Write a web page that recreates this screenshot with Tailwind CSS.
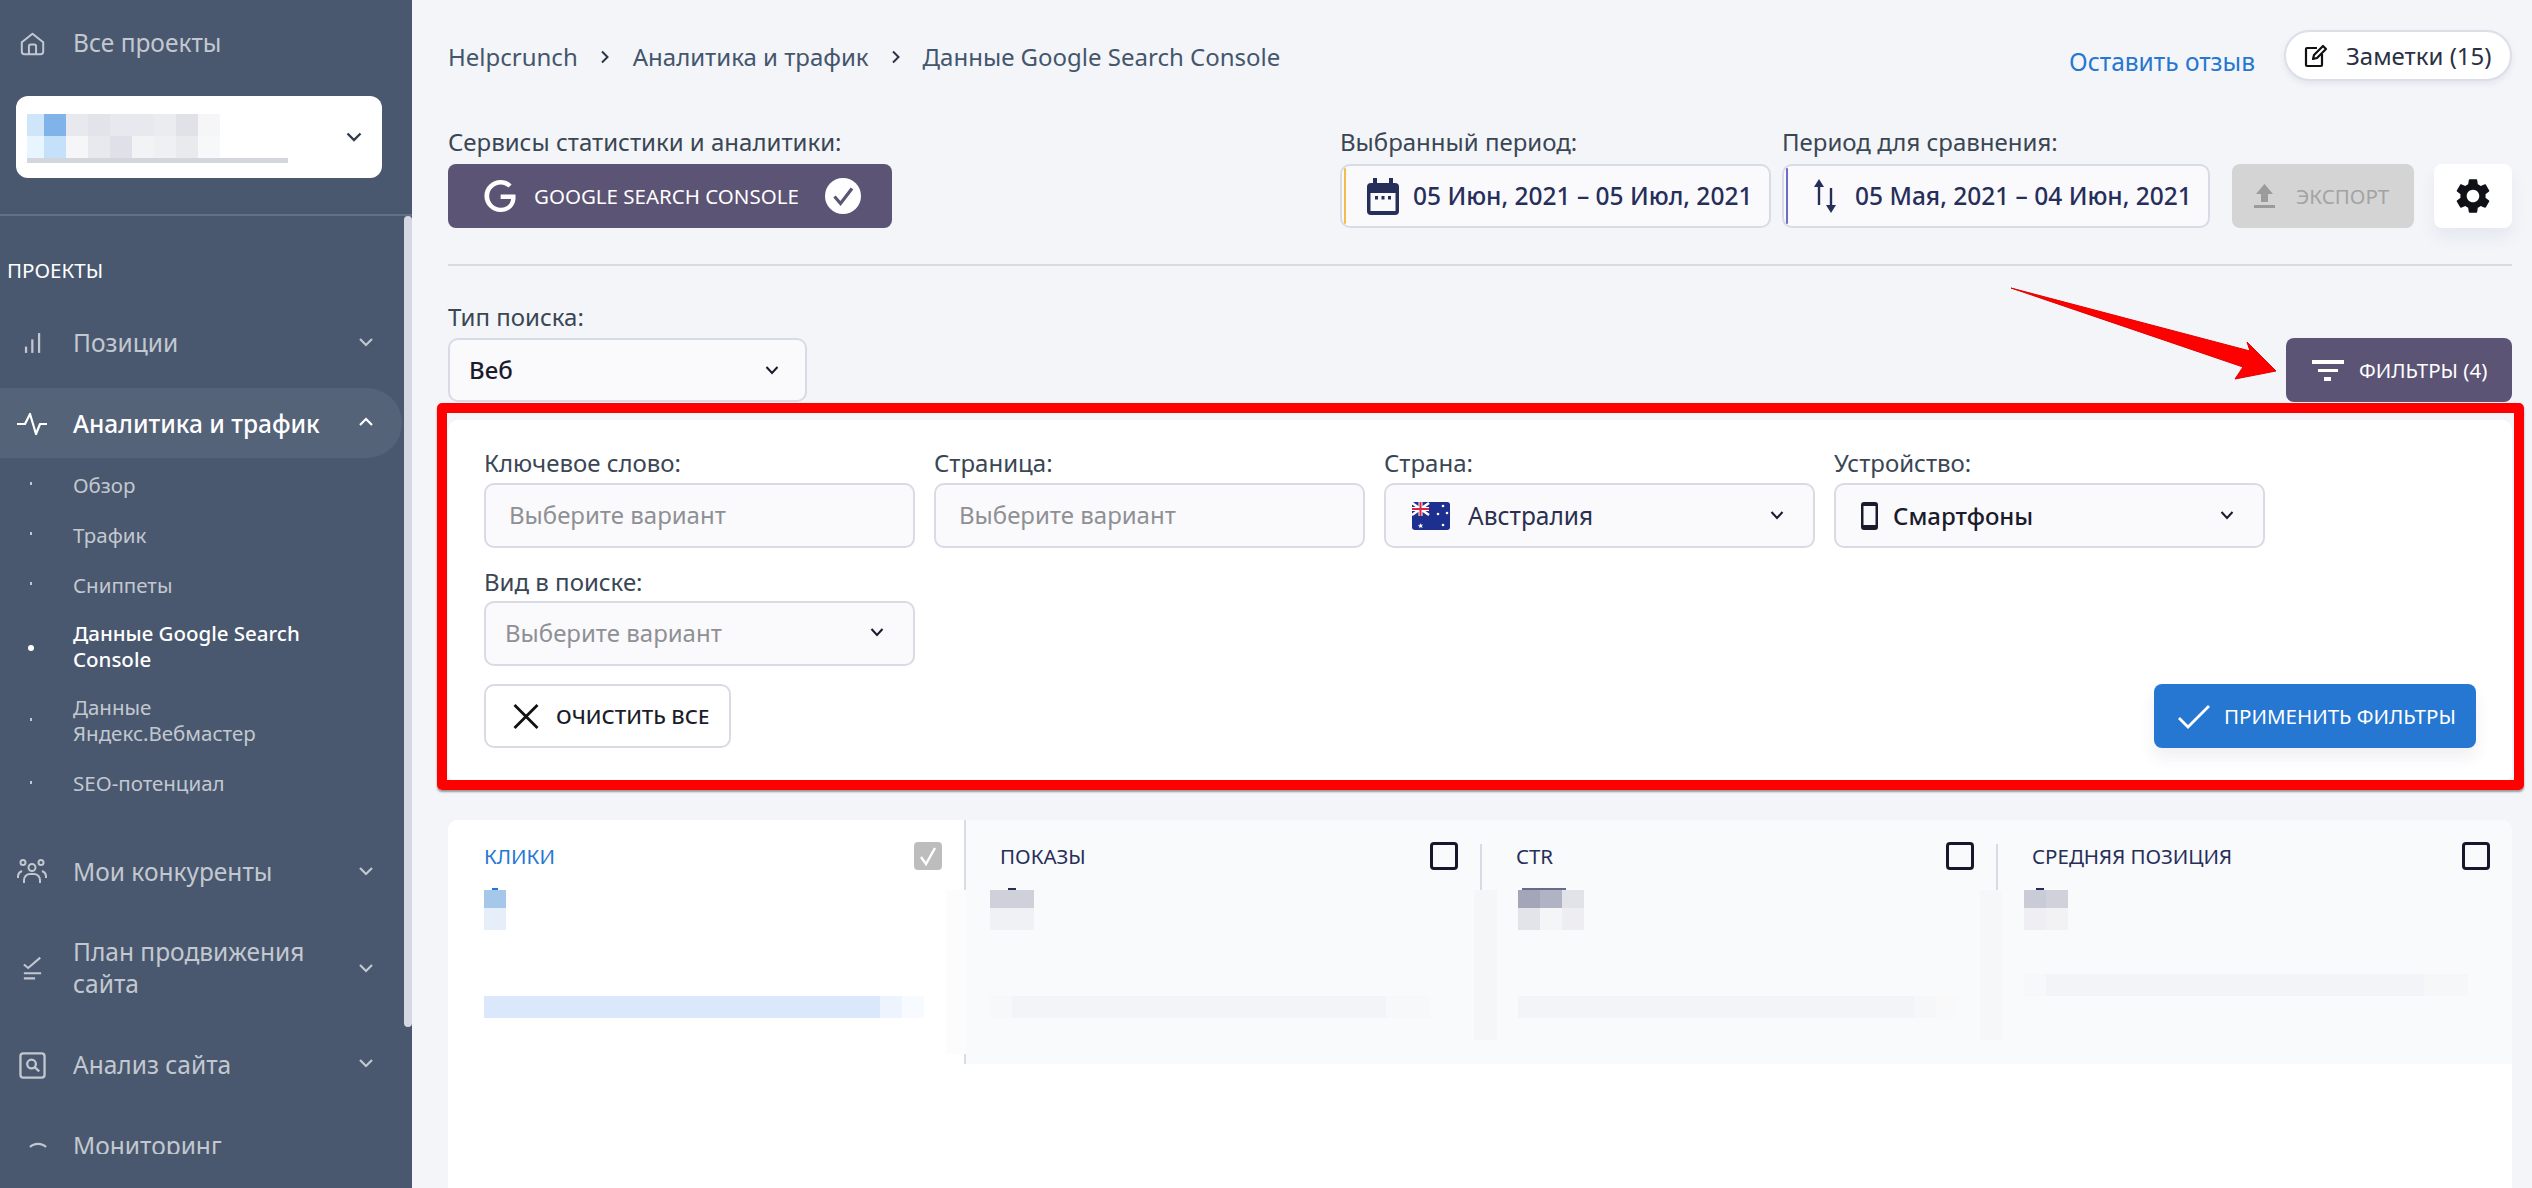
<!DOCTYPE html>
<html lang="ru">
<head>
    <meta charset="UTF-8">
    <title>Данные Google Search Console</title>
    <script src="https://cdn.jsdelivr.net/npm/@tailwindcss/browser@4"></script>
</head>
<body class="font-['Noto_Sans',sans-serif] bg-[#f3f5f9] h-[1188px] overflow-hidden flex">
    <!-- Сайдбар -->
    <aside class="w-[412px] shrink-0 h-[1188px] bg-[#49586f] flex flex-col">
        <div class="h-[216px] border-b-2 border-[#62718a] shrink-0">
            <a class="h-[96px] pb-[10px] flex items-center text-[24.500px] text-[#c3c8d0]">
                <span class="w-[73px] flex justify-center pr-[9px]">
                    <svg class="w-[25px] h-[25px]" viewBox="0 0 28 28" fill="none" stroke="#c3c8d0" stroke-width="2.2" stroke-linejoin="round"><path d="M2 12.5 14 3l12 9.5V23a3 3 0 0 1-3 3H5a3 3 0 0 1-3-3z"/><path d="M10 26v-9a2 2 0 0 1 2-2h4a2 2 0 0 1 2 2v9"/></svg>
                </span>
                Все проекты
            </a>
            <div class="mx-[16px] w-[366px] h-[82px] bg-white rounded-[12px] flex items-center justify-between pl-[11px] pr-[20px]">
                <div class="pt-[2px]">
                    <div class="grid grid-cols-[17px_22px_22px_22px_22px_22px_22px_22px_22px] h-[44px] grid-rows-2">
                        <i class="bg-[#cfe6fa]"></i><i class="bg-[#7fb3ea]"></i><i class="bg-[#e8e9ee]"></i><i class="bg-[#e3e4e9]"></i><i class="bg-[#e8e9ee]"></i><i class="bg-[#e8e9ee]"></i><i class="bg-[#ebecf0]"></i><i class="bg-[#e1e2e7]"></i><i class="bg-[#f6f6f8]"></i>
                        <i class="bg-[#e7f5fe]"></i><i class="bg-[#c4e1f9]"></i><i class="bg-[#f6f6f9]"></i><i class="bg-[#e8e9ee]"></i><i class="bg-[#e0e1e8]"></i><i class="bg-[#f2f3f5]"></i><i class="bg-[#eff0f3]"></i><i class="bg-[#e9eaee]"></i><i class="bg-[#f7f8fa]"></i>
                    </div>
                    <div class="w-[261px] h-[5px] bg-[#d3d6dd]"></div>
                </div>
                <svg class="w-[16px] h-[10px]" viewBox="0 0 16 10" fill="none" stroke="#303c4c" stroke-width="2.4"><path d="M1.5 1.5 8 8l6.500-6.500"/></svg>
            </div>
        </div>
        <nav class="relative h-[938px] overflow-hidden text-[24.500px] text-[#c3c8d0]">
            <!-- скроллбар -->
            <div class="absolute right-0 top-0 w-[8px] h-[811px] rounded-[4px] bg-[#d5d8e3]"></div>
            <div class="pl-[7px] pt-[42px] h-[92px] text-[20.500px] leading-[24px] text-white">ПРОЕКТЫ</div>
            <a class="h-[70px] flex items-center relative">
                <span class="w-[73px] flex justify-center pr-[8px]">
                    <svg class="w-[18px] h-[22px]" viewBox="0 0 20 24" fill="#c3c8d0"><rect x="1" y="16" width="2.500" height="7"/><rect x="8" y="8" width="2.500" height="15"/><rect x="15.500" y="1" width="2.500" height="22"/></svg>
                </span>
                Позиции
                <svg class="absolute left-[359px] top-[30px] w-[14px] h-[9px]" viewBox="0 0 14 9" fill="none" stroke="#c3c8d0" stroke-width="2.200"><path d="M1 1l6 6 6-6"/></svg>
            </a>
            <a class="mt-[10px] h-[70px] pt-[2px] w-[402px] rounded-r-[35px] bg-[#556379] flex items-center relative text-white font-medium">
                <span class="w-[73px] flex justify-center pr-[10px]">
                    <svg class="w-[30px] h-[24px]" viewBox="0 0 30 24" fill="none" stroke="#fff" stroke-width="2.200" stroke-linejoin="round"><path d="M0 12h8l5-10 6 20 4-10h7"/></svg>
                </span>
                Аналитика и трафик
                <svg class="absolute left-[359px] top-[29px] w-[14px] h-[9px]" viewBox="0 0 14 9" fill="none" stroke="#fff" stroke-width="2.200"><path d="M1 8l6-6 6 6"/></svg>
            </a>
            <ul class="pt-[2px] text-[20.500px] leading-[26px]">
                <li class="h-[50px] flex items-center relative"><i class="absolute left-[30px] top-[22px] w-[2px] h-[3px] bg-[#c3c8d0]"></i><span class="ml-[73px]">Обзор</span></li>
                <li class="h-[50px] flex items-center relative"><i class="absolute left-[30px] top-[22px] w-[2px] h-[3px] bg-[#c3c8d0]"></i><span class="ml-[73px]">Трафик</span></li>
                <li class="h-[50px] flex items-center relative"><i class="absolute left-[30px] top-[22px] w-[2px] h-[3px] bg-[#c3c8d0]"></i><span class="ml-[73px]">Сниппеты</span></li>
                <li class="h-[72px] flex items-center relative text-white font-medium"><i class="absolute left-[28px] top-[35px] w-[6px] h-[6px] rounded-full bg-white"></i><span class="ml-[73px]">Данные Google Search<br>Console</span></li>
                <li class="h-[75px] flex items-center relative"><i class="absolute left-[30px] top-[36px] w-[2px] h-[3px] bg-[#c3c8d0]"></i><span class="ml-[73px]">Данные<br>Яндекс.Вебмастер</span></li>
                <li class="h-[52px] flex items-center relative"><i class="absolute left-[30px] top-[24px] w-[2px] h-[3px] bg-[#c3c8d0]"></i><span class="ml-[73px]">SEO-потенциал</span></li>
            </ul>
            <a class="mt-[28px] h-[70px] flex items-center relative">
                <span class="w-[73px] flex justify-center pr-[9px]">
                    <svg class="w-[30px] h-[26px]" viewBox="0 0 30 26" fill="none" stroke="#c3c8d0" stroke-width="2"><circle cx="15" cy="8.500" r="3.500"/><circle cx="6" cy="3.500" r="2.500"/><circle cx="24" cy="3.500" r="2.500"/><path d="M7 24v-3a6 6 0 0 1 6-6h4a6 6 0 0 1 6 6v3"/><path d="M1 19v-2a6 6 0 0 1 4-5M29 19v-2a6 6 0 0 0-4-5"/></svg>
                </span>
                Мои конкуренты
                <svg class="absolute left-[359px] top-[30px] w-[14px] h-[9px]" viewBox="0 0 14 9" fill="none" stroke="#c3c8d0" stroke-width="2.200"><path d="M1 1l6 6 6-6"/></svg>
            </a>
            <a class="mt-[11px] h-[100px] flex items-center relative leading-[32px]">
                <span class="w-[73px] flex justify-center pr-[9px]">
                    <svg class="w-[19px] h-[24px]" viewBox="0 0 22 26" fill="none" stroke="#c3c8d0" stroke-width="2.400"><path d="M1 9l5 4L20 1"/><path d="M1 19h20M1 25h13"/></svg>
                </span>
                <span class="w-[270px]">План продвижения<br>сайта</span>
                <svg class="absolute left-[359px] top-[46px] w-[14px] h-[9px]" viewBox="0 0 14 9" fill="none" stroke="#c3c8d0" stroke-width="2.200"><path d="M1 1l6 6 6-6"/></svg>
            </a>
            <a class="mt-[12px] h-[70px] flex items-center relative">
                <span class="w-[73px] flex justify-center pr-[9px]">
                    <svg class="w-[27px] h-[27px]" viewBox="0 0 28 28" fill="none" stroke="#c3c8d0" stroke-width="2.400"><rect x="1.500" y="1.500" width="25" height="25" rx="3"/><circle cx="13" cy="12.500" r="4.500"/><path d="M16.500 16l4.500 4"/></svg>
                </span>
                Анализ сайта
                <svg class="absolute left-[359px] top-[29px] w-[14px] h-[9px]" viewBox="0 0 14 9" fill="none" stroke="#c3c8d0" stroke-width="2.200"><path d="M1 1l6 6 6-6"/></svg>
            </a>
            <a class="mt-[11px] h-[70px] flex items-center">
                <span class="w-[73px] flex justify-center pl-[3px]">
                    <svg class="w-[30px] h-[30px]" viewBox="0 0 30 30" fill="none" stroke="#c3c8d0" stroke-width="2.200"><path d="M7 16a10 8 0 0 1 16 0"/></svg>
                </span>
                Мониторинг
            </a>
        </nav>
    </aside>

    <!-- Контент -->
    <main class="relative flex-1 min-w-0 pl-[36px] pr-[20px] pt-[30px] flex flex-col text-[#3a4654] text-[24px] leading-[26px]">
        <header class="h-[51px] flex items-center justify-between shrink-0">
            <div class="flex items-center text-[#44566c] pt-[2px]">
                <span>Helpcrunch</span>
                <svg class="w-[10px] h-[14px] mx-[22.500px]" viewBox="0 0 10 14" fill="none" stroke="#2b3444" stroke-width="2"><path d="M2 1.500 7.500 7 2 12.500"/></svg>
                <span>Аналитика и трафик</span>
                <svg class="w-[10px] h-[14px] mx-[22px]" viewBox="0 0 10 14" fill="none" stroke="#2b3444" stroke-width="2"><path d="M2 1.500 7.500 7 2 12.500"/></svg>
                <span>Данные Google Search Console</span>
            </div>
            <div class="flex items-center">
                <a class="text-[#2577d1] pt-[13px] mr-[29px] text-[24.500px]">Оставить отзыв</a>
                <button class="w-[228px] h-[51px] rounded-full bg-white border-2 border-[#dcdee8] shadow-[0_3px_6px_rgba(60,70,110,0.08)] flex items-center pl-[18px] text-[#2b3044]">
                    <svg class="w-[24px] h-[24px] mr-[18px]" viewBox="0 0 24 24" fill="none" stroke="#111" stroke-width="2.200"><path d="M13 4H3a1 1 0 0 0-1 1v16a1 1 0 0 0 1 1h14a1 1 0 0 0 1-1V10"/><path d="M9 15l1-4 9-9 3 3-9 9z" stroke-linejoin="round"/></svg>
                    Заметки (15)
                </button>
            </div>
        </header>

        <section class="mt-[49px] flex justify-between shrink-0">
            <div>
                <div class="mb-[9px] mt-[-1px]">Сервисы статистики и аналитики:</div>
                <button class="w-[444px] h-[64px] rounded-[8px] bg-[#5b5475] text-white flex items-center pl-[36px] text-[20.500px] text-left">
                    <svg class="w-[32px] h-[32px] mr-[18px]" viewBox="0 0 24 24" fill="#fff"><path d="M12.480 10.920v3.280h7.840c-.240 1.840-.853 3.187-1.787 4.133-1.147 1.147-2.933 2.400-6.053 2.400-4.827 0-8.600-3.893-8.600-8.720s3.773-8.720 8.600-8.720c2.600 0 4.507 1.027 5.907 2.347l2.307-2.307C18.747 1.440 16.133 0 12.480 0 5.867 0 .307 5.387.307 12s5.560 12 12.173 12c3.573 0 6.267-1.173 8.373-3.360 2.160-2.160 2.840-5.213 2.840-7.667 0-.760-.053-1.467-.173-2.053H12.480z"/></svg>
                    <span class="w-[291px]">GOOGLE SEARCH CONSOLE</span>
                    <svg class="w-[36px] h-[36px]" viewBox="0 0 36 36"><circle cx="18" cy="18" r="18" fill="#fff"/><path d="M9.500 18.500l6 7L27 10.500" fill="none" stroke="#5b5475" stroke-width="3.200"/></svg>
                </button>
            </div>
            <div class="flex items-end">
                <div class="mr-[11px]">
                    <div class="mb-[9px] mt-[-1px]">Выбранный период:</div>
                    <button class="relative w-[431px] h-[64px] rounded-[10px] bg-[#fafafd] border-2 border-[#d8dae6] flex items-center pl-[25px] text-[#262e5a] font-medium text-[24.500px]">
                        <i class="absolute left-[2px] top-[2px] bottom-[2px] w-[2px] bg-[#f3bd4e] rounded-full"></i>
                        <svg class="w-[32px] h-[37px] mr-[14px]" viewBox="0 0 32 37" fill="#262e5a"><rect x="0" y="5" width="32" height="32" rx="4"/><rect x="6" y="0" width="4" height="8"/><rect x="22" y="0" width="4" height="8"/><rect x="3.500" y="15" width="25" height="18" fill="#fafafd"/><rect x="8" y="18" width="3" height="3.500"/><rect x="14.500" y="18" width="3" height="3.500"/><rect x="21" y="18" width="3" height="3.500"/></svg>
                        05 Июн, 2021 – 05 Июл, 2021
                    </button>
                </div>
                <div class="mr-[22px]">
                    <div class="mb-[9px] mt-[-1px]">Период для сравнения:</div>
                    <button class="relative w-[428px] h-[64px] rounded-[10px] bg-[#fafafd] border-2 border-[#d8dae6] flex items-center pl-[28px] text-[#262e5a] font-medium text-[24.500px]">
                        <i class="absolute left-[2px] top-[2px] bottom-[2px] w-[2px] bg-[#6a6ec7] rounded-full"></i>
                        <svg class="w-[26px] h-[34px] mr-[17px]" viewBox="0 0 26 34" fill="#262e5a"><rect x="5.800" y="5" width="2.400" height="21"/><path d="M7 0l5 8H2z"/><rect x="17.800" y="9" width="2.400" height="20"/><path d="M19 34l-5-8h10z"/></svg>
                        05 Мая, 2021 – 04 Июн, 2021
                    </button>
                </div>
                <button class="w-[182px] h-[64px] rounded-[8px] bg-[#d4d4d4] text-[#a3a3a3] flex items-center pl-[22px] text-[20.500px] mr-[20px]">
                    <svg class="w-[21px] h-[24px] mr-[21px]" viewBox="0 0 21 24" fill="#9b9b9b"><path d="M10.500 0 19 10h-5v8H7v-8H2z"/><rect x="0" y="21" width="21" height="3"/></svg>
                    ЭКСПОРТ
                </button>
                <button class="w-[78px] h-[64px] rounded-[8px] bg-white shadow-[0_10px_16px_rgba(60,70,110,0.07)] flex items-center justify-center">
                    <svg class="w-[42px] h-[42px]" viewBox="0 0 24 24" fill="#0f1116"><path d="M19.140 12.940c.040-.300.060-.610.060-.940 0-.320-.020-.640-.070-.940l2.030-1.580c.180-.140.230-.410.120-.610l-1.920-3.320c-.120-.220-.370-.290-.590-.220l-2.390.960c-.500-.380-1.030-.700-1.620-.940l-.360-2.540c-.040-.240-.240-.410-.480-.410h-3.840c-.240 0-.430.170-.470.410l-.360 2.540c-.590.240-1.130.570-1.620.940l-2.390-.960c-.220-.080-.470 0-.590.220L2.740 8.870c-.120.210-.080.470.120.610l2.030 1.580c-.050.300-.090.630-.090.940s.020.640.070.940l-2.030 1.580c-.180.140-.230.410-.12.610l1.920 3.320c.120.220.370.290.590.220l2.390-.960c.500.380 1.030.700 1.620.940l.360 2.540c.050.240.240.410.480.410h3.840c.240 0 .440-.170.470-.410l.360-2.540c.590-.240 1.130-.560 1.620-.940l2.390.960c.220.080.470 0 .590-.220l1.920-3.320c.120-.220.070-.470-.120-.610l-2.010-1.580zM12 15.600c-1.980 0-3.600-1.620-3.600-3.600s1.620-3.600 3.600-3.600 3.600 1.620 3.600 3.600-1.620 3.600-3.600 3.600z"/></svg>
                </button>
            </div>
        </section>

        <div class="mt-[36px] h-[2px] bg-[#d8dae4] shrink-0"></div>

        <section class="mt-[38px] flex items-end justify-between shrink-0">
            <div>
                <div class="mb-[8px]">Тип поиска:</div>
                <div class="w-[359px] h-[64px] rounded-[10px] bg-[#fafafd] border-2 border-[#d8dae6] flex items-center justify-between pl-[19px] pr-[26px] text-[#1a1c2c] font-medium">
                    Веб
                    <svg class="w-[14px] h-[9px]" viewBox="0 0 14 9" fill="none" stroke="#1a1c2c" stroke-width="2"><path d="M1.500 1 7 7l5.500-6"/></svg>
                </div>
            </div>
            <button class="w-[226px] h-[64px] rounded-[8px] bg-[#5b5475] text-white flex items-center pl-[26px] text-[20.500px]">
                <svg class="w-[32px] h-[24px] mr-[15px]" viewBox="0 0 32 24" fill="#fff"><rect x="0" y="2" width="32" height="4"/><rect x="6" y="11" width="20" height="3"/><rect x="12" y="19" width="7" height="4"/></svg>
                ФИЛЬТРЫ (4)
            </button>
        </section>

        <!-- Фильтры -->
        <section class="mt-[18px] h-[362px] bg-white rounded-[10px] px-[36px] pt-[30px] shrink-0">
            <div class="grid grid-cols-[431px_431px_431px_431px] gap-x-[19px]">
                <div>
                    <div class="mb-[7px]">Ключевое слово:</div>
                    <div class="h-[65px] pb-[2px] rounded-[10px] bg-[#fafafd] border-2 border-[#d8dae6] flex items-center pl-[23px] text-[#8f9094]">Выберите вариант</div>
                </div>
                <div>
                    <div class="mb-[7px]">Страница:</div>
                    <div class="h-[65px] pb-[2px] rounded-[10px] bg-[#fafafd] border-2 border-[#d8dae6] flex items-center pl-[23px] text-[#8f9094]">Выберите вариант</div>
                </div>
                <div>
                    <div class="mb-[7px]">Страна:</div>
                    <div class="h-[65px] rounded-[10px] bg-[#fafafd] border-2 border-[#d8dae6] flex items-center pl-[26px] pr-[29px] text-[#2c3050] text-[24.500px]">
                        <svg class="w-[38px] h-[28px] mr-[18px]" viewBox="0 0 38 28"><rect width="38" height="28" rx="3" fill="#1d2f8f"/><path d="M0 1l17 12M17 1 0 13" stroke="#fff" stroke-width="2.500"/><path d="M8.500 0v14M0 7h17" stroke="#fff" stroke-width="4"/><path d="M8.500 0v14M0 7h17" stroke="#e0233f" stroke-width="2"/><path d="M8 21l1 1.800 2-.300-1.200 1.600 1 1.800-2-.800-1.500 1.500.200-2-1.800-1 2-.400z" fill="#fff"/><circle cx="31" cy="4" r="1.300" fill="#fff"/><circle cx="26" cy="12" r="1.300" fill="#fff"/><circle cx="35" cy="11" r="1.300" fill="#fff"/><circle cx="31" cy="23" r="1.300" fill="#fff"/></svg>
                        <span class="flex-1">Австралия</span>
                        <svg class="w-[14px] h-[9px]" viewBox="0 0 14 9" fill="none" stroke="#1a1c2c" stroke-width="2"><path d="M1.500 1 7 7l5.500-6"/></svg>
                    </div>
                </div>
                <div>
                    <div class="mb-[7px]">Устройство:</div>
                    <div class="h-[65px] rounded-[10px] bg-[#fafafd] border-2 border-[#d8dae6] flex items-center pl-[25px] pr-[29px] text-[#1a1c2c] font-medium">
                        <svg class="w-[17px] h-[28px] mr-[15px]" viewBox="0 0 17 28"><rect width="17" height="28" rx="3" fill="#1a1c2c"/><rect x="2.500" y="4" width="12" height="19" fill="#fafafd"/></svg>
                        <span class="flex-1">Смартфоны</span>
                        <svg class="w-[14px] h-[9px]" viewBox="0 0 14 9" fill="none" stroke="#1a1c2c" stroke-width="2"><path d="M1.500 1 7 7l5.500-6"/></svg>
                    </div>
                </div>
                <div class="mt-[21px]">
                    <div class="mb-[6px]">Вид в поиске:</div>
                    <div class="h-[65px] pb-[2px] rounded-[10px] bg-[#fafafd] border-2 border-[#d8dae6] flex items-center justify-between pl-[19px] pr-[29px] text-[#8f9094]">
                        Выберите вариант
                        <svg class="w-[14px] h-[9px]" viewBox="0 0 14 9" fill="none" stroke="#1a1c2c" stroke-width="2"><path d="M1.500 1 7 7l5.500-6"/></svg>
                    </div>
                </div>
            </div>
            <div class="mt-[18px] flex justify-between">
                <button class="w-[247px] h-[64px] rounded-[10px] bg-white border-2 border-[#d8dae6] flex items-center pl-[27px] text-[20.500px] font-medium text-[#1b1c2c]">
                    <svg class="w-[26px] h-[25px] mr-[17px]" viewBox="0 0 26 25" fill="none" stroke="#111" stroke-width="2.800"><path d="M1.500 1 24.500 24M24.500 1 1.500 24"/></svg>
                    ОЧИСТИТЬ ВСЕ
                </button>
                <button class="w-[322px] h-[64px] rounded-[8px] bg-[#2577d1] text-white shadow-[0_10px_16px_rgba(60,70,110,0.08)] flex items-center pl-[24px] text-[20.500px]">
                    <svg class="w-[32px] h-[25px] mr-[14px]" viewBox="0 0 32 25" fill="none" stroke="#fff" stroke-width="2.800"><path d="M1 14l9 9L31 2"/></svg>
                    ПРИМЕНИТЬ ФИЛЬТРЫ
                </button>
            </div>
        </section>

        <!-- Метрики -->
        <section class="relative mt-[38px] flex-1 bg-white rounded-t-[10px] overflow-hidden text-[20.500px] text-[#262e5a]">
            <div class="grid grid-cols-[518px_516px_516px_514px] h-[244px]">
                <div class="relative pl-[36px] pr-[24px] pt-[22px] bg-white">
                    <i class="absolute right-0 top-0 w-[2px] h-[70px] bg-[#d8dae4]"></i>
                    <i class="absolute right-0 top-[234px] w-[2px] h-[10px] bg-[#d8dae4]"></i>
                    <i class="absolute right-[-3px] top-[70px] w-[23px] h-[164px] bg-[#fcfcfd]"></i>
                    <div class="h-[28px] flex items-center justify-between text-[#2577d1]">
                        КЛИКИ
                        <span class="w-[28px] h-[28px] rounded-[4px] bg-[#bdbdbd] flex items-center justify-center">
                            <svg class="w-[18px] h-[20px]" viewBox="0 0 18 20" fill="none" stroke="#fff" stroke-width="2.400"><path d="M2 11l5 7L16 2"/></svg>
                        </span>
                    </div>
                    <div class="mt-[18px] w-[22px]">
                        <i class="block ml-[8px] w-[6px] h-[2px] bg-[#2577d1]"></i>
                        <div class="h-[18px] bg-[#a4c7ea]"></div>
                        <div class="h-[22px] bg-[#e6eff9]"></div>
                    </div>
                    <div class="mt-[66px] flex h-[22px]">
                        <i class="w-[396px] bg-[#dbe8fb]"></i><i class="w-[22px] bg-[#eef4fd]"></i><i class="w-[22px] bg-[#f7fafe]"></i>
                    </div>
                </div>
                <div class="relative pl-[34px] pr-[24px] pt-[22px] bg-[#f9fafc]">
                    <i class="absolute right-0 top-[24px] w-[2px] h-[46px] bg-[#d8dae4]"></i>
                    <i class="absolute right-[-15px] top-[70px] w-[23px] h-[150px] bg-[#f5f6f8] z-10"></i>
                    <div class="h-[28px] flex items-center justify-between">
                        ПОКАЗЫ
                        <span class="w-[28px] h-[28px] rounded-[4px] border-[3px] border-[#15182a]"></span>
                    </div>
                    <div class="mt-[18px] ml-[-10px] w-[44px]">
                        <i class="block ml-[18px] w-[8px] h-[2px] bg-[#262e5a]"></i>
                        <div class="h-[18px] bg-[#ced0da]"></div>
                        <div class="h-[22px] bg-[#f0f1f4]"></div>
                    </div>
                    <div class="mt-[66px] ml-[-10px] flex h-[22px]">
                        <i class="w-[22px] bg-[#f7f8fa]"></i><i class="w-[374px] bg-[#f3f4f8]"></i><i class="w-[44px] bg-[#f7f8fa]"></i>
                    </div>
                </div>
                <div class="relative pl-[34px] pr-[24px] pt-[22px] bg-[#f9fafc]">
                    <i class="absolute right-0 top-[24px] w-[2px] h-[46px] bg-[#d8dae4]"></i>
                    <i class="absolute right-[-4px] top-[70px] w-[22px] h-[150px] bg-[#f6f7f9] z-10"></i>
                    <div class="h-[28px] flex items-center justify-between">
                        CTR
                        <span class="w-[28px] h-[28px] rounded-[4px] border-[3px] border-[#15182a]"></span>
                    </div>
                    <div class="mt-[18px] ml-[2px] w-[66px]">
                        <i class="block ml-[4px] w-[44px] h-[2px] bg-[#262e5a]/70"></i>
                        <div class="grid grid-cols-[22px_22px_22px] grid-rows-[18px_22px]">
                            <i class="bg-[#a3a5b8]"></i><i class="bg-[#b0b3c3]"></i><i class="bg-[#e1e3e9]"></i>
                            <i class="bg-[#e3e4ea]"></i><i class="bg-[#f4f5f7]"></i><i class="bg-[#eeeef2]"></i>
                        </div>
                    </div>
                    <div class="mt-[66px] ml-[2px] flex h-[22px]">
                        <i class="w-[396px] bg-[#f3f4f7]"></i><i class="w-[22px] bg-[#f6f7f9]"></i><i class="w-[22px] bg-[#f9f9fa]"></i>
                    </div>
                </div>
                <div class="pl-[34px] pr-[22px] pt-[22px] bg-[#f9fafc]">
                    <div class="h-[28px] flex items-center justify-between">
                        СРЕДНЯЯ ПОЗИЦИЯ
                        <span class="w-[28px] h-[28px] rounded-[4px] border-[3px] border-[#15182a]"></span>
                    </div>
                    <div class="mt-[18px] ml-[-8px] w-[44px]">
                        <i class="block ml-[12px] w-[8px] h-[2px] bg-[#262e5a]"></i>
                        <div class="grid grid-cols-[22px_22px] grid-rows-[18px_22px]">
                            <i class="bg-[#c9cbd6]"></i><i class="bg-[#d0d1db]"></i>
                            <i class="bg-[#efeff3]"></i><i class="bg-[#f2f2f5]"></i>
                        </div>
                    </div>
                    <div class="mt-[44px] ml-[-8px] flex h-[22px]">
                        <i class="w-[22px] bg-[#f7f8fa]"></i><i class="w-[378px] bg-[#f3f4f7]"></i><i class="w-[44px] bg-[#f6f7f9]"></i>
                    </div>
                </div>
            </div>
        </section>

        <!-- Пометки поверх скриншота: рамка и стрелка -->
        <div class="absolute left-[25px] top-[403px] w-[2087px] h-[387px] border-[10px] border-[#ff0000] rounded-[5px] shadow-[0_2px_2px_rgba(60,60,60,0.5)]"></div>
        <svg class="absolute left-[1590px] top-[280px] w-[290px] h-[110px]" viewBox="0 0 290 110">
            <path d="M9 8 248 71 245 62 274 91 233 99 241 87z" fill="#ff0000" stroke="#e00000" stroke-width="1"/>
        </svg>
    </main>
</body>
</html>
